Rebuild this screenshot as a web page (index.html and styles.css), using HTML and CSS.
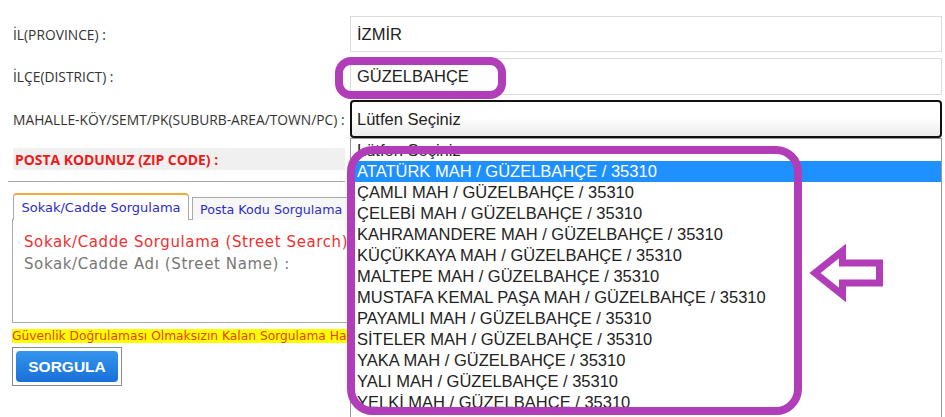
FILE: index.html
```html
<!DOCTYPE html>
<html lang="tr">
<head>
<meta charset="utf-8">
<title>Posta Kodu Sorgulama</title>
<link rel="stylesheet" href="styles.css">
</head>
<body>
<div class="page">
  <div class="form">
    <div class="row row1">
      <div class="lbl">İL(PROVINCE) :</div>
      <div class="field">İZMİR</div>
    </div>
    <div class="row row2">
      <div class="lbl">İLÇE(DISTRICT) :</div>
      <div class="field">GÜZELBAHÇE</div>
    </div>
    <div class="row row3">
      <div class="lbl">MAHALLE-KÖY/SEMT/PK(SUBURB-AREA/TOWN/PC) :</div>
      <div class="field select">Lütfen Seçiniz</div>
    </div>
    <div class="row zip-row">
      <div class="zip-lbl">POSTA KODUNUZ (ZIP CODE) :</div>
    </div>
  </div>

  <div class="divider"></div>

  <div class="tabs">
    <div class="tab tab-active">Sokak/Cadde Sorgulama</div>
    <div class="tab tab-idle">Posta Kodu Sorgulama</div>
  </div>
  <div class="panel">
    <div class="panel-title">Sokak/Cadde Sorgulama (Street Search)</div>
    <div class="panel-field">Sokak/Cadde Adı (Street Name) :</div>
  </div>
  <div class="warning"><span>Güvenlik Doğrulaması Olmaksızın Kalan Sorgulama Hakkınız : 5</span></div>
  <div class="btn-wrap"><div class="btn">SORGULA</div></div>

  <div class="dropdown">
    <div class="opt">Lütfen Seçiniz</div>
    <div class="opt opt-sel">ATATÜRK MAH / GÜZELBAHÇE / 35310</div>
    <div class="opt">ÇAMLI MAH / GÜZELBAHÇE / 35310</div>
    <div class="opt">ÇELEBİ MAH / GÜZELBAHÇE / 35310</div>
    <div class="opt">KAHRAMANDERE MAH / GÜZELBAHÇE / 35310</div>
    <div class="opt">KÜÇÜKKAYA MAH / GÜZELBAHÇE / 35310</div>
    <div class="opt">MALTEPE MAH / GÜZELBAHÇE / 35310</div>
    <div class="opt">MUSTAFA KEMAL PAŞA MAH / GÜZELBAHÇE / 35310</div>
    <div class="opt">PAYAMLI MAH / GÜZELBAHÇE / 35310</div>
    <div class="opt">SİTELER MAH / GÜZELBAHÇE / 35310</div>
    <div class="opt">YAKA MAH / GÜZELBAHÇE / 35310</div>
    <div class="opt">YALI MAH / GÜZELBAHÇE / 35310</div>
    <div class="opt">YELKİ MAH / GÜZELBAHÇE / 35310</div>
  </div>

  <div class="mark mark-district"></div>
  <div class="mark mark-list"></div>
  <svg class="arrow" width="90" height="70" viewBox="800 240 90 70">
    <polygon points="815,273 842.5,251 842.5,263 879.5,263 879.5,283 842.5,283 842.5,295" fill="#fff" stroke="#b23db9" stroke-width="7" stroke-linejoin="miter"/>
  </svg>
</div>
</body>
</html>
```

FILE: styles.css
```css
html, body {
  margin: 0;
  padding: 0;
  background: #fff;
}

.page {
  position: relative;
  width: 945px;
  height: 417px;
  overflow: hidden;
  background: #fff;
}

.row {
  display: flex;
  align-items: center;
  padding-left: 13px;
}

.row1 { margin-top: 16px; height: 36px; }
.row2 { margin-top: 6px; height: 37px; }
.row3 { margin-top: 5px; height: 38px; }
.zip-row { margin-top: 10px; height: 22px; }

.lbl {
  width: 337px;
  font-family: "Open Sans", "Noto Sans", sans-serif;
  font-size: 13.8px;
  color: #333;
  white-space: nowrap;
}

.field {
  width: 592px;
  height: 100%;
  box-sizing: border-box;
  border: 1px solid #dcdcdc;
  padding-left: 6px;
  display: flex;
  align-items: center;
  font-family: "Liberation Sans", Arial, sans-serif;
  font-size: 16.5px;
  color: #222;
}

.select {
  border: 2px solid #111;
  border-radius: 4px;
  padding-left: 5px;
  background: linear-gradient(#fff 45%, #ececec);
}

.zip-lbl {
  width: 332px;
  height: 22px;
  box-sizing: border-box;
  padding-left: 2px;
  display: flex;
  align-items: center;
  background: #f0f0f0;
  font-family: "Open Sans", "Noto Sans", sans-serif;
  font-weight: 700;
  font-size: 13.9px;
  color: #f01818;
  white-space: nowrap;
}

.divider {
  margin: 11px 0 0 8px;
  width: 337px;
  border-top: 1px solid #a8a8a8;
}

.tabs {
  display: flex;
  align-items: flex-end;
  margin-top: 11px;
  padding-left: 13px;
  width: 337px;
  height: 27px;
  overflow: hidden;
  position: relative;
  z-index: 1;
  margin-bottom: -1px;
}

.tab {
  height: 23px;
  box-sizing: border-box;
  border: 1px solid #aaa;
  border-bottom: none;
  background: #f7f7f7;
  margin-left: 3px;
  padding: 0 8px;
  display: flex;
  align-items: center;
  flex-shrink: 0;
  font-family: "DejaVu Sans", Verdana, sans-serif;
  font-size: 13px;
  color: #2d2dc8;
  white-space: nowrap;
}

.tab-idle {
  font-size: 12.7px;
  padding-left: 7px;
}

.tab-active {
  width: 176px;
  height: 27px;
  margin-left: 0;
  justify-content: center;
  padding: 0;
  background: #fff;
  border-top: 2px solid #f2a93b;
  border-radius: 4px 4px 0 0;
}

.panel {
  margin-left: 12px;
  width: 340px;
  height: 104px;
  box-sizing: border-box;
  border: 1px solid #aaa;
  padding: 11px 11px;
  overflow: hidden;
  font-family: "DejaVu Sans", Verdana, sans-serif;
  font-size: 15px;
  letter-spacing: 0.6px;
  line-height: 22px;
  white-space: nowrap;
}

.panel-title { color: #f03030; }
.panel-field { color: #777; }

.warning {
  margin: 5px 0 0 12px;
  width: 338px;
  height: 17px;
  overflow: hidden;
  white-space: nowrap;
  font-family: "DejaVu Sans", Verdana, sans-serif;
  font-size: 12.25px;
  line-height: 17px;
  color: #e8400e;
}

.warning span { background: #ffff00; }

.btn-wrap {
  margin: 2px 0 0 12px;
  width: 110px;
  height: 39px;
  box-sizing: border-box;
  border: 1px solid #8a8a8a;
  padding: 3px;
}

.btn {
  height: 100%;
  border-radius: 4px;
  background: linear-gradient(#3495ee, #1a6fd8);
  display: flex;
  align-items: center;
  justify-content: center;
  font-family: "Liberation Sans", Arial, sans-serif;
  font-weight: 700;
  font-size: 15.5px;
  color: #fff;
}

.dropdown {
  position: absolute;
  left: 350px;
  top: 138px;
  width: 592px;
  height: 300px;
  box-sizing: border-box;
  border: 1px solid #999;
  padding-top: 1px;
  background: #fff;
  z-index: 2;
}

.opt {
  height: 21px;
  line-height: 21px;
  padding-left: 6px;
  font-family: "Liberation Sans", Arial, sans-serif;
  font-size: 16.5px;
  color: #222;
  white-space: nowrap;
}

.opt-sel {
  background: #1e90ff;
  color: #fff;
}

.mark {
  position: absolute;
  box-sizing: border-box;
  border: 8px solid #b23db9;
  z-index: 3;
}

.mark-district {
  left: 335px;
  top: 57px;
  width: 171px;
  height: 42px;
  border-radius: 16px;
}

.mark-list {
  left: 347px;
  top: 146px;
  width: 455px;
  height: 269px;
  border-radius: 26px;
}

.arrow {
  position: absolute;
  left: 800px;
  top: 240px;
  z-index: 3;
}
```
